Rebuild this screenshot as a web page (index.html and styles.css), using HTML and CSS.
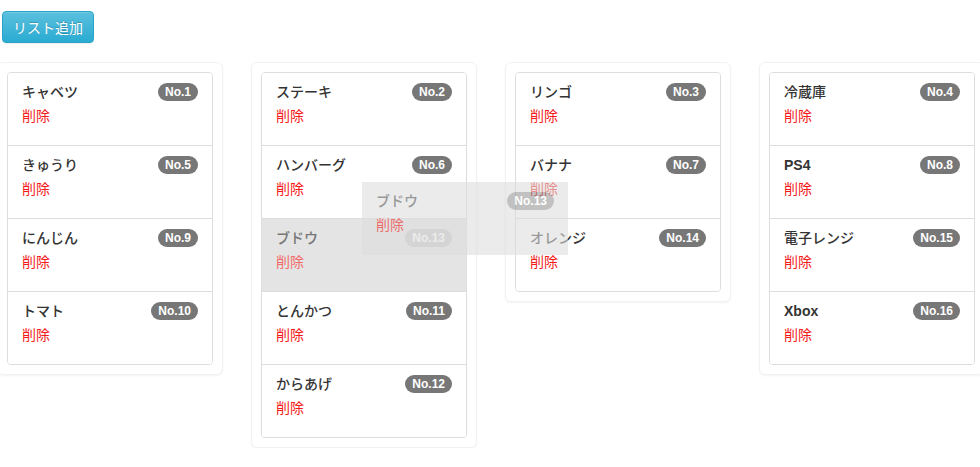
FILE: index.html
```html
<!DOCTYPE html>
<html lang="ja">
<head>
<meta charset="utf-8">
<title>List</title>
<link rel="stylesheet" href="styles.css">
</head>
<body>
<div class="page">
  <button class="btn-add" type="button">リスト追加</button>
  <div class="board">
    <div class="panel">
      <ul class="list">
        <li class="item"><div class="row"><span class="title">キャベツ</span><span class="badge">No.1</span></div><a class="del">削除</a></li>
        <li class="item"><div class="row"><span class="title">きゅうり</span><span class="badge">No.5</span></div><a class="del">削除</a></li>
        <li class="item"><div class="row"><span class="title">にんじん</span><span class="badge">No.9</span></div><a class="del">削除</a></li>
        <li class="item"><div class="row"><span class="title">トマト</span><span class="badge">No.10</span></div><a class="del">削除</a></li>
      </ul>
    </div>
    <div class="panel">
      <ul class="list">
        <li class="item"><div class="row"><span class="title">ステーキ</span><span class="badge">No.2</span></div><a class="del">削除</a></li>
        <li class="item"><div class="row"><span class="title">ハンバーグ</span><span class="badge">No.6</span></div><a class="del">削除</a></li>
        <li class="item placeholder"><div class="row"><span class="title">ブドウ</span><span class="badge">No.13</span></div><a class="del">削除</a></li>
        <li class="item"><div class="row"><span class="title">とんかつ</span><span class="badge">No.11</span></div><a class="del">削除</a></li>
        <li class="item"><div class="row"><span class="title">からあげ</span><span class="badge">No.12</span></div><a class="del">削除</a></li>
      </ul>
    </div>
    <div class="panel">
      <ul class="list">
        <li class="item"><div class="row"><span class="title">リンゴ</span><span class="badge">No.3</span></div><a class="del">削除</a></li>
        <li class="item"><div class="row"><span class="title">バナナ</span><span class="badge">No.7</span></div><a class="del">削除</a></li>
        <li class="item"><div class="row"><span class="title">オレンジ</span><span class="badge">No.14</span></div><a class="del">削除</a></li>
      </ul>
    </div>
    <div class="panel">
      <ul class="list">
        <li class="item"><div class="row"><span class="title">冷蔵庫</span><span class="badge">No.4</span></div><a class="del">削除</a></li>
        <li class="item"><div class="row"><span class="title latin">PS4</span><span class="badge">No.8</span></div><a class="del">削除</a></li>
        <li class="item"><div class="row"><span class="title">電子レンジ</span><span class="badge">No.15</span></div><a class="del">削除</a></li>
        <li class="item"><div class="row"><span class="title latin">Xbox</span><span class="badge">No.16</span></div><a class="del">削除</a></li>
      </ul>
    </div>
  </div>
  <div class="ghost"><div class="row"><span class="title">ブドウ</span><span class="badge">No.13</span></div><a class="del">削除</a></div>
</div>
</body>
</html>
```
FILE: styles.css
```css
html, body {
  margin: 0;
  padding: 0;
  background: #fff;
}
body {
  font-family: "Liberation Sans", "Noto Sans CJK JP", sans-serif;
  font-size: 14px;
  color: #333;
  overflow: hidden;
}
.page {
  position: relative;
  padding-top: 11px;
}
.btn-add {
  display: block;
  margin-left: 2px;
  height: 32px;
  padding: 0 10px;
  white-space: nowrap;
  font-family: "Liberation Sans", "Noto Sans CJK JP", sans-serif;
  font-size: 14px;
  color: #fff;
  text-shadow: 0 -1px 0 rgba(0,0,0,0.2);
  background: linear-gradient(to bottom, #5bc0de 0%, #2aabd2 100%);
  border: 1px solid #28a4c9;
  border-radius: 4px;
  box-shadow: inset 0 1px 0 rgba(255,255,255,0.15), 0 1px 1px rgba(0,0,0,0.075);
}
.board {
  display: flex;
  align-items: flex-start;
  gap: 28px;
  margin-top: 19px;
  margin-left: -3px;
}
.panel {
  flex: 0 0 226px;
  box-sizing: border-box;
  padding: 9px;
  background: #fff;
  border: 1px solid #f2f2f2;
  border-radius: 6px;
  box-shadow: 0 1px 2px rgba(0,0,0,0.05);
}
.list {
  list-style: none;
  margin: 0;
  padding: 0;
  border: 1px solid #ddd;
  border-radius: 4px;
  overflow: hidden;
}
.item {
  box-sizing: border-box;
  height: 72px;
  padding: 10px 14px 0;
  background: #fff;
}
.item + .item {
  border-top: 1px solid #ddd;
  height: 73px;
}
.row {
  display: flex;
  justify-content: space-between;
  align-items: center;
  height: 18px;
}
.title {
  font-weight: 500;
  color: #333;
  line-height: 18px;
}
.title.latin {
  font-weight: bold;
}
.badge {
  display: inline-block;
  font-family: "Liberation Sans", sans-serif;
  font-size: 12px;
  font-weight: bold;
  line-height: 12px;
  padding: 3px 7px;
  color: #fff;
  background: #777;
  border-radius: 10px;
}
.del {
  display: block;
  margin-top: 5px;
  line-height: 20px;
  color: #f41a1a;
  cursor: pointer;
}
.placeholder {
  background: #e4e4e4;
}
.placeholder .title {
  color: #777;
}
.placeholder .badge {
  background: #c6c6c6;
}
.placeholder .del {
  color: #f26b6b;
}
.ghost {
  position: absolute;
  left: 362px;
  top: 182px;
  width: 206px;
  height: 73px;
  box-sizing: border-box;
  padding: 10px 14px 0 14px;
  background: #dedede;
  opacity: 0.6;
}
.ghost .title {
  color: #555;
}
.ghost .badge {
  background: #999;
}
```
